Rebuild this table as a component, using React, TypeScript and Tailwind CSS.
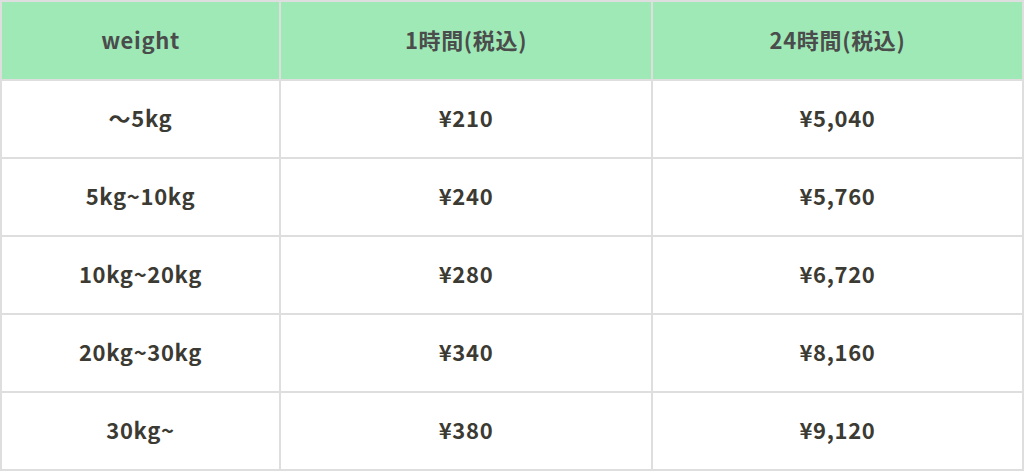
const rows = [
  ['～5kg', '¥210', '¥5,040'],
  ['5kg~10kg', '¥240', '¥5,760'],
  ['10kg~20kg', '¥280', '¥6,720'],
  ['20kg~30kg', '¥340', '¥8,160'],
  ['30kg~', '¥380', '¥9,120'],
];

const App = () => (
  <div className="bg-white w-[1024px] h-[474px]" style={{ fontFamily: '"Noto Sans CJK JP", "Noto Sans", sans-serif' }}>
    <table className="w-[1022px] border-collapse table-fixed text-center font-bold text-[22px] tracking-[0.03em]">
      <colgroup>
        <col className="w-[279px]" />
        <col className="w-[372px]" />
        <col className="w-[371px]" />
      </colgroup>
      <thead>
        <tr className="h-[79px] bg-[#9fe9b7] text-[#4a4d4b]">
          <th className="border-2 border-[#dedede] pb-[2px]">weight</th>
          <th className="border-2 border-[#dedede] pb-[2px]">1時間(税込)</th>
          <th className="border-2 border-[#dedede] pb-[2px]">24時間(税込)</th>
        </tr>
      </thead>
      <tbody className="text-[#3b3a33]">
        {rows.map((r) => (
          <tr key={r[0]} className="h-[78px]">
            {r.map((c, i) => (
              <td key={i} className="border-2 border-[#dedede] pb-[4px]">{c}</td>
            ))}
          </tr>
        ))}
      </tbody>
    </table>
  </div>
);

export default App;
